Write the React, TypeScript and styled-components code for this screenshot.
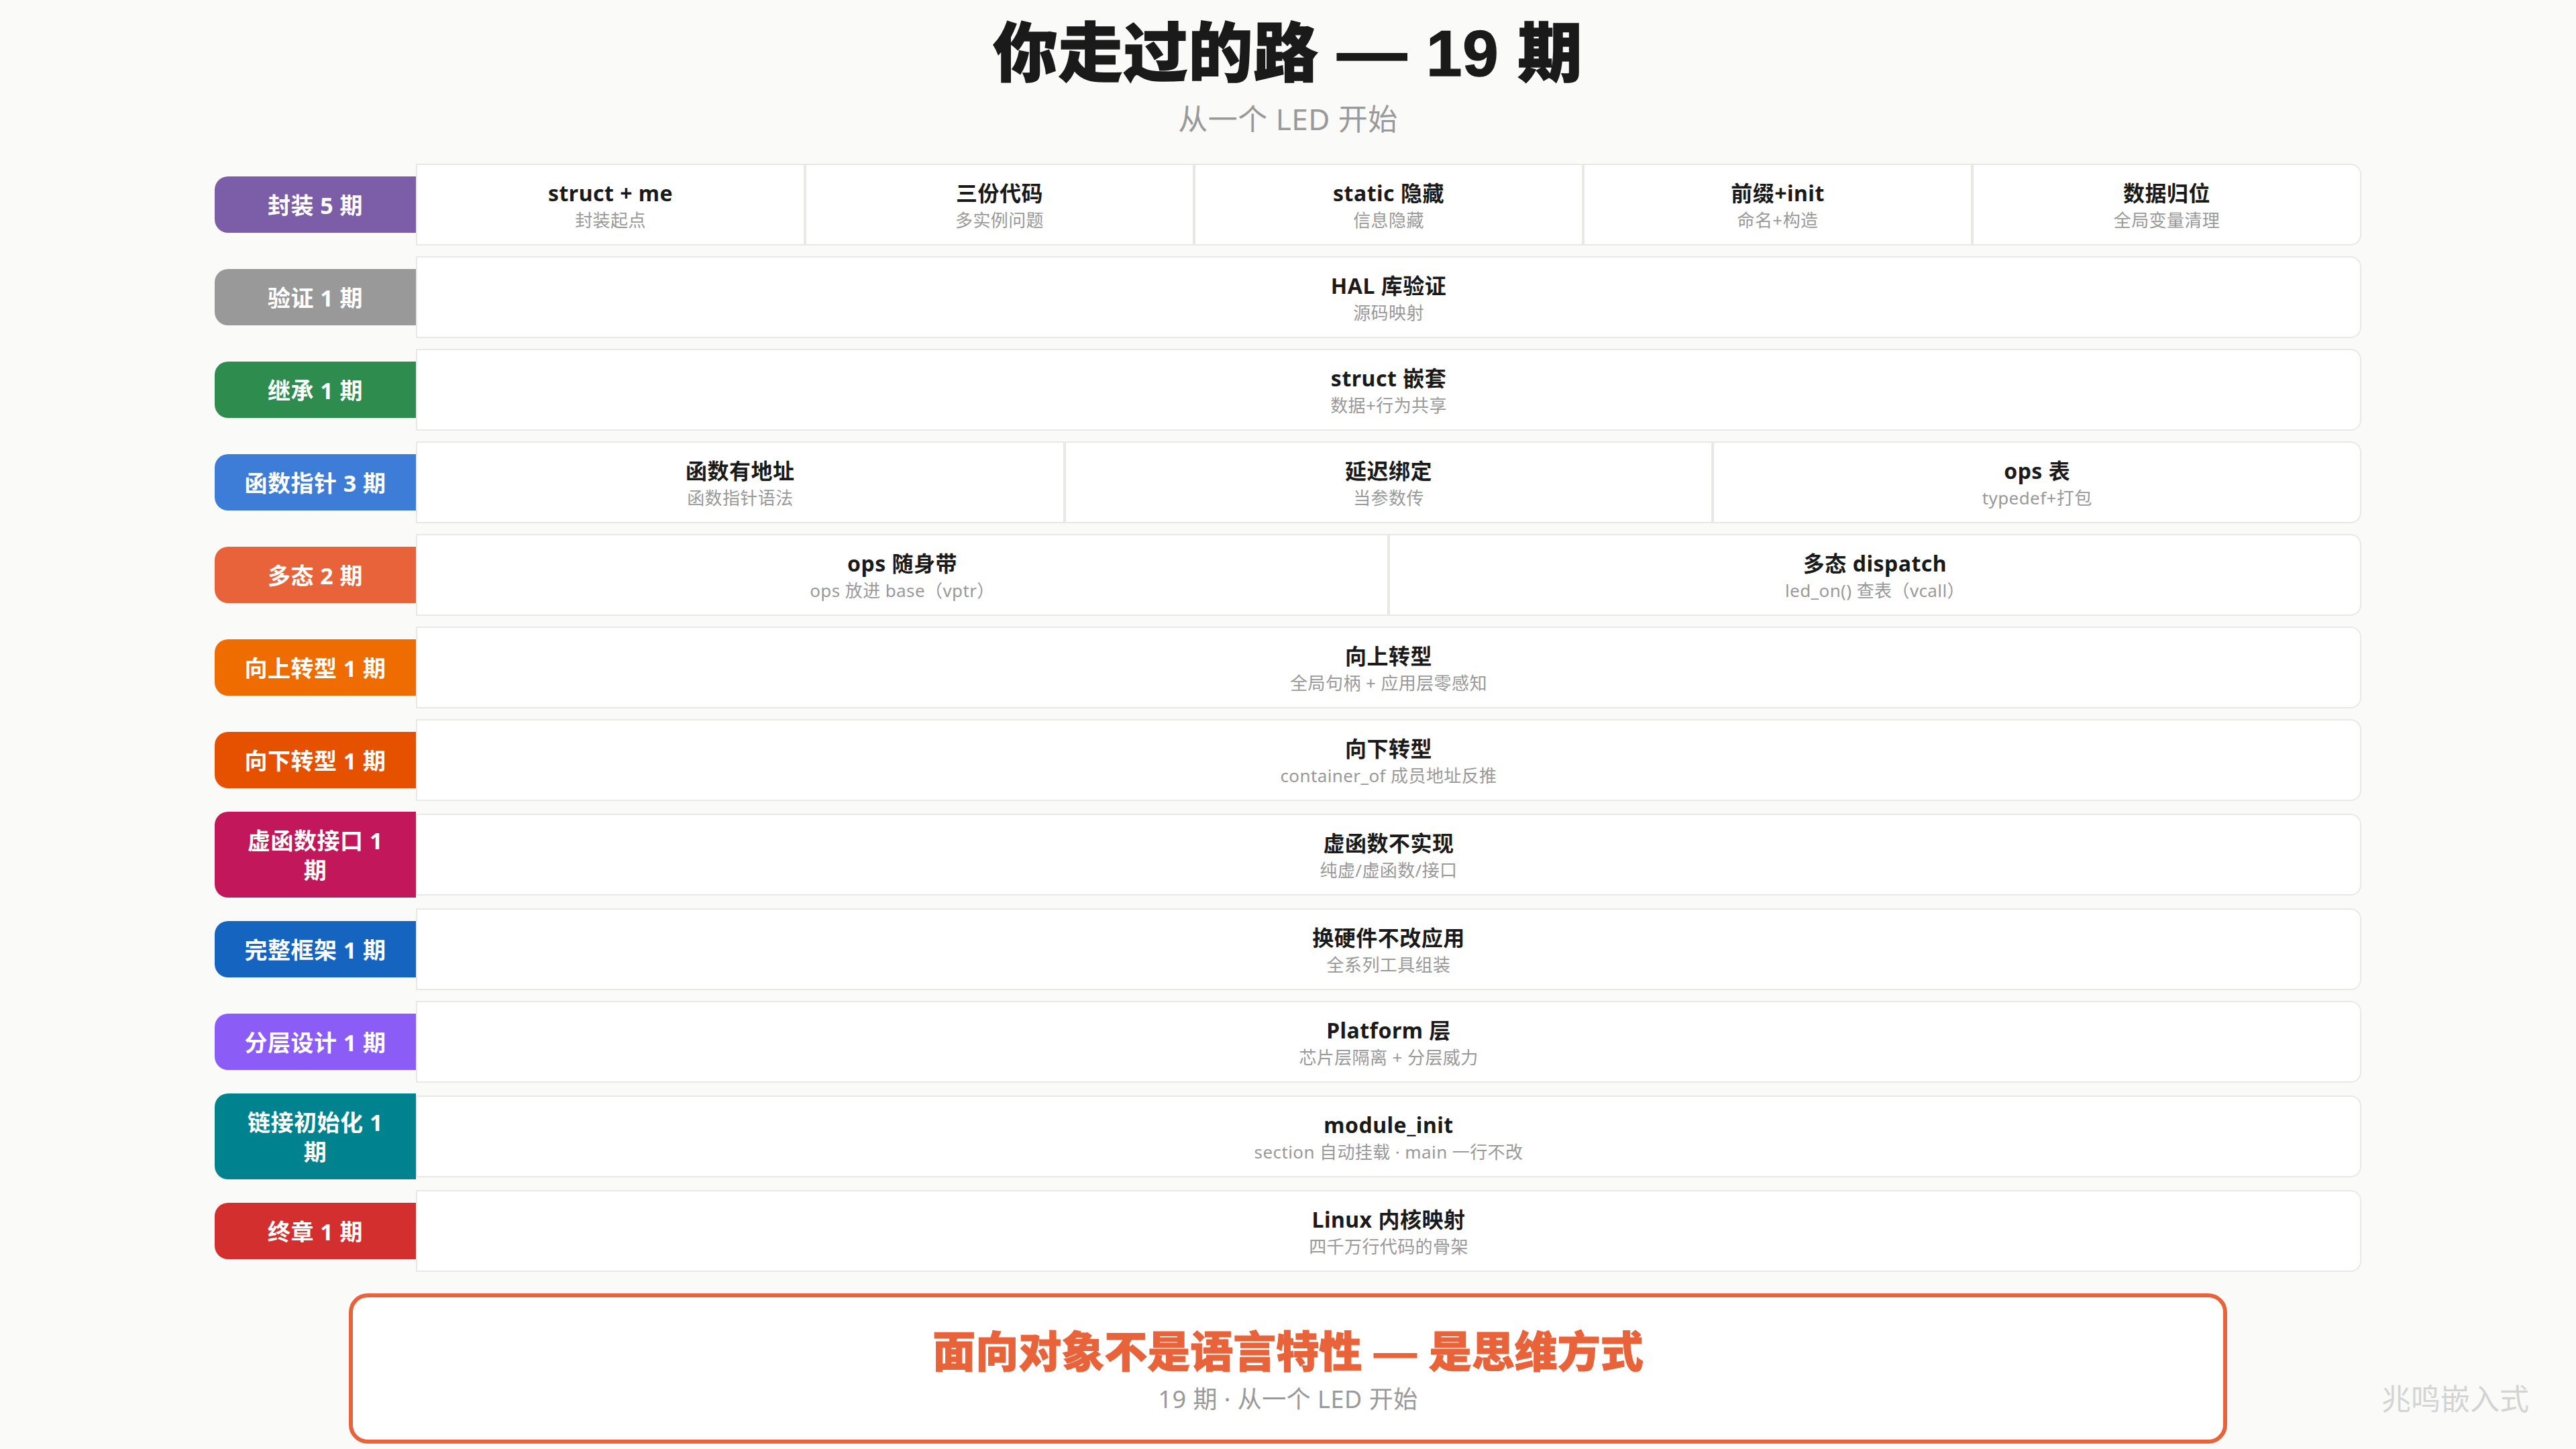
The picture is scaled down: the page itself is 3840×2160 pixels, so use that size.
import React from 'react';
import styled, { createGlobalStyle } from 'styled-components';

const GlobalStyle = createGlobalStyle`
  html, body {
    margin: 0;
    padding: 0;
    background: #fafaf8;
  }
  body {
    font-family: "Noto Sans", "Noto Sans CJK SC", sans-serif;
    color: #1a1a1a;
  }
`;

const Page = styled.div`
  position: relative;
  width: 3840px;
  height: 2160px;
  box-sizing: border-box;
  padding-top: 18px;
  display: flex;
  flex-direction: column;
  align-items: center;
  background: #fafaf8;
  overflow: hidden;
`;

const Title = styled.h1`
  margin: 0;
  font-family: "Liberation Sans", "Noto Sans CJK SC", sans-serif;
  font-size: 96px;
  line-height: 118px;
  font-weight: 900;
  letter-spacing: 1px;
  -webkit-text-stroke: 1.5px #1a1a1a;
  color: #1a1a1a;
`;

const TitleDash = styled.span`
  font-size: 104px;
`;

const Subtitle = styled.div`
  margin-top: 8px;
  margin-bottom: 37px;
  font-size: 44px;
  line-height: 60px;
  letter-spacing: 0.5px;
  color: #999;
`;

const Rows = styled.div`
  width: 3200px;
  display: flex;
  flex-direction: column;
  gap: 16px;
`;

const Row = styled.div`
  display: flex;
  align-items: center;
`;

const Label = styled.div<{ $color: string }>`
  width: 300px;
  flex: none;
  box-sizing: border-box;
  padding: 21px 32px 19px;
  border-radius: 20px 0 0 20px;
  background: ${({ $color }) => $color};
  color: #fff;
  font-size: 34px;
  line-height: 44px;
  font-weight: 700;
  letter-spacing: 0.5px;
  text-align: center;
`;

const Cells = styled.div`
  flex: 1;
  height: 122px;
  box-sizing: border-box;
  display: flex;
  gap: 4px;
  background: #e8e8e4;
  border: 2px solid #e8e8e4;
  border-radius: 0 16px 16px 0;
  overflow: hidden;
`;

const Cell = styled.div`
  flex: 1;
  box-sizing: border-box;
  padding-top: 2px;
  display: flex;
  flex-direction: column;
  align-items: center;
  justify-content: center;
  background: #fff;
`;

const CellTitle = styled.div`
  font-size: 32px;
  line-height: 44px;
  font-weight: 700;
  letter-spacing: 0.5px;
  color: #1a1a1a;
`;

const CellSub = styled.div`
  font-size: 26px;
  line-height: 36px;
  letter-spacing: 0.4px;
  color: #999;
`;

const Footer = styled.div`
  margin-top: 32px;
  width: 2800px;
  height: 224px;
  box-sizing: border-box;
  padding-top: 4px;
  border: 6px solid #e8633a;
  border-radius: 28px;
  background: #fff;
  display: flex;
  flex-direction: column;
  align-items: center;
  justify-content: center;
`;

const FooterTitle = styled.div`
  font-family: "Liberation Sans", "Noto Sans CJK SC", sans-serif;
  font-size: 64px;
  line-height: 88px;
  font-weight: 900;
  -webkit-text-stroke: 1px #e8633a;
  color: #e8633a;
`;

const FooterSub = styled.div`
  font-size: 36px;
  line-height: 52px;
  letter-spacing: 0.5px;
  color: #999;
`;

const Watermark = styled.div`
  position: absolute;
  right: 70px;
  bottom: 45px;
  font-size: 44px;
  line-height: 60px;
  color: #d4d4d4;
`;

type Item = [string, string];

const rows: { label: string; color: string; items: Item[] }[] = [
  {
    label: '封装 5 期',
    color: '#7b5ea7',
    items: [
      ['struct + me', '封装起点'],
      ['三份代码', '多实例问题'],
      ['static 隐藏', '信息隐藏'],
      ['前缀+init', '命名+构造'],
      ['数据归位', '全局变量清理'],
    ],
  },
  { label: '验证 1 期', color: '#999999', items: [['HAL 库验证', '源码映射']] },
  { label: '继承 1 期', color: '#2d8c4e', items: [['struct 嵌套', '数据+行为共享']] },
  {
    label: '函数指针 3 期',
    color: '#3d7dd8',
    items: [
      ['函数有地址', '函数指针语法'],
      ['延迟绑定', '当参数传'],
      ['ops 表', 'typedef+打包'],
    ],
  },
  {
    label: '多态 2 期',
    color: '#e8633a',
    items: [
      ['ops 随身带', 'ops 放进 base（vptr）'],
      ['多态 dispatch', 'led_on() 查表（vcall）'],
    ],
  },
  { label: '向上转型 1 期', color: '#ef6c00', items: [['向上转型', '全局句柄 + 应用层零感知']] },
  { label: '向下转型 1 期', color: '#e65100', items: [['向下转型', 'container_of 成员地址反推']] },
  { label: '虚函数接口 1 期', color: '#c2185b', items: [['虚函数不实现', '纯虚/虚函数/接口']] },
  { label: '完整框架 1 期', color: '#1565c0', items: [['换硬件不改应用', '全系列工具组装']] },
  { label: '分层设计 1 期', color: '#8b5cf6', items: [['Platform 层', '芯片层隔离 + 分层威力']] },
  { label: '链接初始化 1 期', color: '#00838f', items: [['module_init', 'section 自动挂载 · main 一行不改']] },
  { label: '终章 1 期', color: '#d32f2f', items: [['Linux 内核映射', '四千万行代码的骨架']] },
];

export default function App() {
  return (
    <>
      <GlobalStyle />
      <Page>
        <Title>
          你走过的路 <TitleDash>—</TitleDash> 19 期
        </Title>
        <Subtitle>从一个 LED 开始</Subtitle>
        <Rows>
          {rows.map((row) => (
            <Row key={row.label}>
              <Label $color={row.color}>{row.label}</Label>
              <Cells>
                {row.items.map(([title, sub]) => (
                  <Cell key={title}>
                    <CellTitle>{title}</CellTitle>
                    <CellSub>{sub}</CellSub>
                  </Cell>
                ))}
              </Cells>
            </Row>
          ))}
        </Rows>
        <Footer>
          <FooterTitle>面向对象不是语言特性 — 是思维方式</FooterTitle>
          <FooterSub>19 期 · 从一个 LED 开始</FooterSub>
        </Footer>
        <Watermark>兆鸣嵌入式</Watermark>
      </Page>
    </>
  );
}
